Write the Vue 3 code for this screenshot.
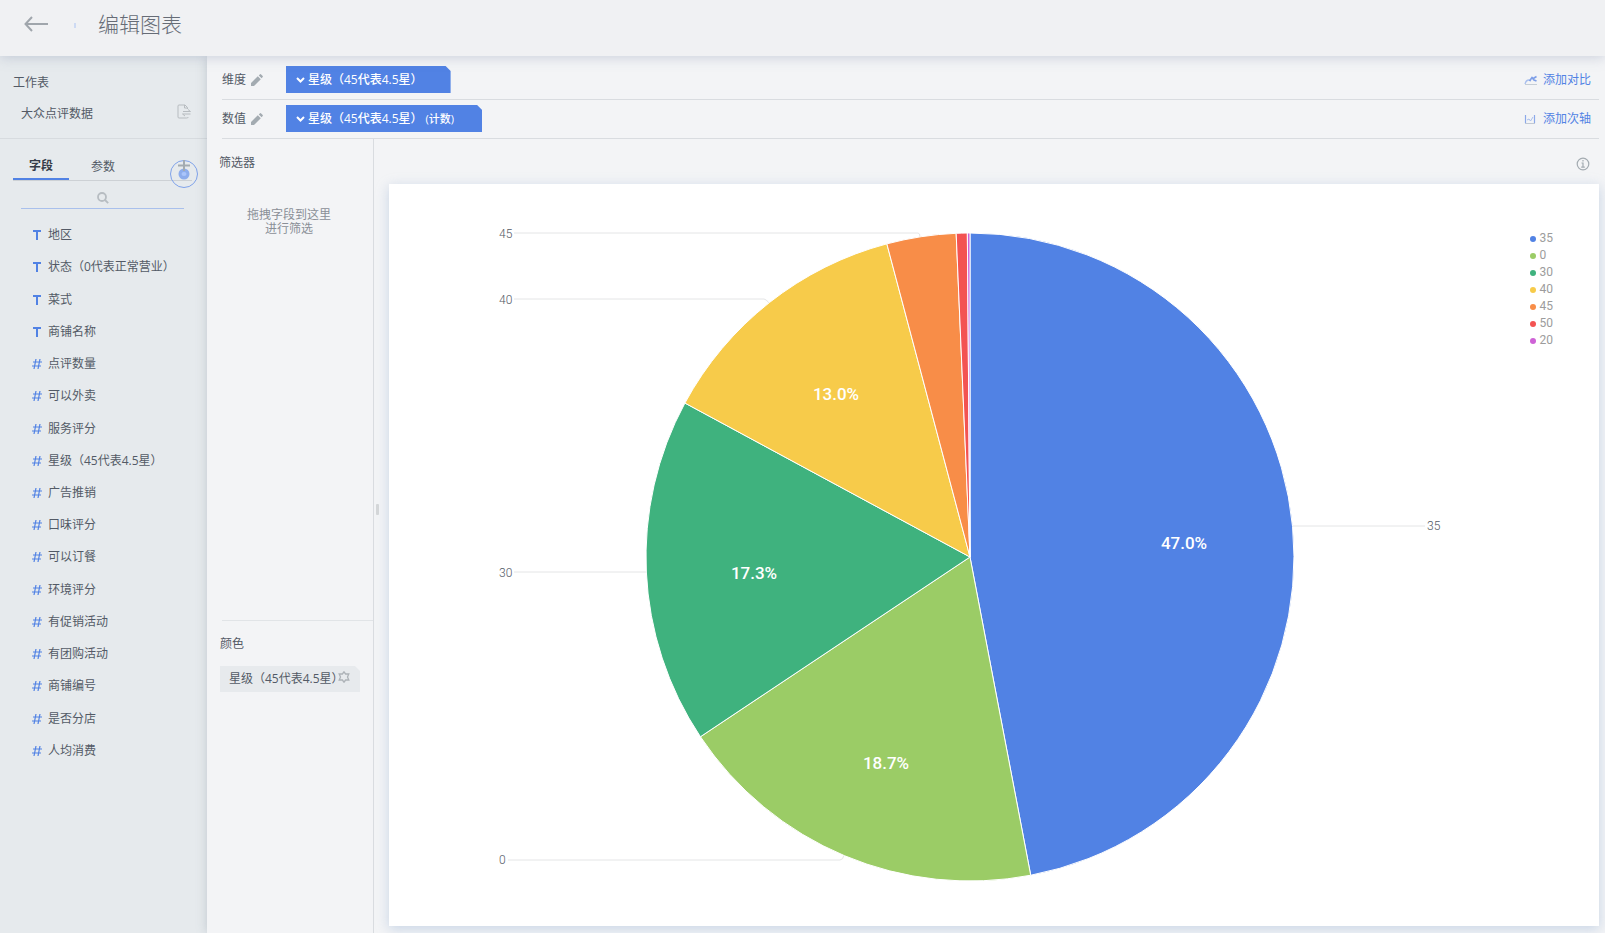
<script setup>
import { ref } from 'vue'

const textFields = ['地区', '状态（0代表正常营业）', '菜式', '商铺名称']
const numberFields = [
  '点评数量', '可以外卖', '服务评分', '星级（45代表4.5星）', '广告推销', '口味评分', '可以订餐',
  '环境评分', '有促销活动', '有团购活动', '商铺编号', '是否分店', '人均消费',
]
const fields = [
  ...textFields.map((name) => ({ name, type: 'text' })),
  ...numberFields.map((name) => ({ name, type: 'number' })),
]

const tab = ref('fields')
const keyword = ref('')

const cx = 581
const cy = 373
const r = 324

const series = [
  { name: '35', color: '#5182e4', from: 0, to: 0.47, percent: '47.0%', px: 795, py: 359 },
  { name: '0', color: '#9bcc66', from: 0.47, to: 0.6564, percent: '18.7%', px: 497, py: 579 },
  { name: '30', color: '#3fb27e', from: 0.6564, to: 0.8288, percent: '17.3%', px: 365, py: 389 },
  { name: '40', color: '#f7cb4a', from: 0.8288, to: 0.9587, percent: '13.0%', px: 447, py: 210 },
  { name: '45', color: '#f88d48', from: 0.9587, to: 0.9932, percent: '' },
  { name: '50', color: '#f35352', from: 0.9932, to: 0.9987, percent: '' },
  { name: '20', color: '#ce62d6', from: 0.9987, to: 1, percent: '' },
]

const leaders = [
  { name: '45', d: 'M125 49H529Q531 49 531 53', x: 110, y: 54 },
  { name: '40', d: 'M125 115H375Q377 115 380 119', x: 110, y: 120 },
  { name: '30', d: 'M125 388H257', x: 110, y: 393 },
  { name: '0', d: 'M119 676H451Q454 676 455 671', x: 110, y: 680 },
  { name: '35', d: 'M892 342H1036', x: 1038, y: 346 },
]

function point(t) {
  const a = t * Math.PI * 2
  return `${(cx + r * Math.sin(a)).toFixed(2)} ${(cy - r * Math.cos(a)).toFixed(2)}`
}

function slice(s) {
  return `M${cx} ${cy}L${point(s.from)}A${r} ${r} 0 0 1 ${point(s.to)}Z`
}
</script>

<template>
  <div class="page">
    <header class="topbar">
      <button class="back" aria-label="返回">
        <svg width="24" height="16" viewBox="0 0 24 16">
          <path d="M8 1L1.5 8L8 15M1.5 8H24" />
        </svg>
      </button>
      <span class="tick"></span>
      <h1>编辑图表</h1>
    </header>

    <div class="body">
      <aside class="sidebar">
        <section class="sheet">
          <h2>工作表</h2>
          <div class="sheet-row">
            <span>大众点评数据</span>
            <button aria-label="更换工作表">
              <svg width="14" height="15" viewBox="0 0 14 15">
                <path d="M10.5 5V3.5L8 1H2Q1 1 1 2V13Q1 14 2 14H9.5Q11 14 11.5 13M7.5 1V4H10.5M6 7.5H13.5L11 5.5M13.5 10H5.5L8 12" />
              </svg>
            </button>
          </div>
        </section>

        <nav class="tabs">
          <button :class="{ active: tab === 'fields' }" @click="tab = 'fields'">字段</button>
          <button :class="{ active: tab === 'params' }" @click="tab = 'params'">参数</button>
          <button class="add" aria-label="添加字段">
            <svg width="30" height="30" viewBox="0 0 30 30">
              <circle cx="15" cy="15" r="13.5" fill="none" stroke="#7fa2ea" />
              <circle cx="15" cy="15" r="5.5" fill="#8dadec" />
              <ellipse cx="15" cy="15" rx="2.5" ry="2" fill="#aac5fb" />
              <path d="M15 1V12M9 6.5H21" stroke="#a3abb1" stroke-width="2" />
            </svg>
          </button>
        </nav>

        <label class="search">
          <input v-model="keyword" type="text" aria-label="搜索字段" />
          <svg v-if="!keyword" width="12" height="12" viewBox="0 0 12 12">
            <circle cx="5" cy="5" r="4" /><path d="M8 8L11.2 11.2" />
          </svg>
        </label>

        <ul class="fields">
          <li v-for="f in fields" :key="f.name">
            <svg v-if="f.type === 'text'" width="10" height="10" viewBox="0 0 10 10">
              <path d="M1 1H9M5 1V10" stroke-width="2" />
            </svg>
            <svg v-else width="10" height="10" viewBox="0 0 10 10">
              <path d="M4 0L2 10M8 0L6 10M1 3H10M0 7H9" stroke-width="1.2" />
            </svg>
            <span>{{ f.name }}</span>
          </li>
        </ul>
      </aside>

      <main class="editor">
        <div class="shelf">
          <span class="shelf-name">维度</span>
          <button class="edit" aria-label="编辑维度">
            <svg width="12" height="12" viewBox="0 0 12 12"><path d="M0 9L6.8 2.2L9.8 5.2L3 12H0ZM7.8 1.4L9 .2Q9.4 -.1 9.9 .3L11.7 2.1Q12.1 2.6 11.7 3L10.6 4.2Z" /></svg>
          </button>
          <button class="pill">
            <svg width="9" height="6" viewBox="0 0 9 6"><path d="M1 1L4.5 4.5L8 1" /></svg>
            <span>星级（45代表4.5星）</span>
          </button>
          <a class="link" href="#">
            <svg width="14" height="12" viewBox="0 0 14 12">
              <path d="M1 10Q2 6 5 6L7 7" stroke="#a9bfee" stroke-width="1.3" />
              <path d="M5.5 7L8 3.5L10 6L12.5 7M8.5 5L12.5 2.5" stroke="#7e9fe8" stroke-width="1.6" />
              <path d="M1 10.5H13" stroke="#c5cdd6" />
            </svg>
            <span>添加对比</span>
          </a>
        </div>
        <div class="shelf">
          <span class="shelf-name">数值</span>
          <button class="edit" aria-label="编辑数值">
            <svg width="12" height="12" viewBox="0 0 12 12"><path d="M0 9L6.8 2.2L9.8 5.2L3 12H0ZM7.8 1.4L9 .2Q9.4 -.1 9.9 .3L11.7 2.1Q12.1 2.6 11.7 3L10.6 4.2Z" /></svg>
          </button>
          <button class="pill">
            <svg width="9" height="6" viewBox="0 0 9 6"><path d="M1 1L4.5 4.5L8 1" /></svg>
            <span>星级（45代表4.5星）</span><small>(计数)</small>
          </button>
          <a class="link" href="#">
            <svg width="14" height="12" viewBox="0 0 14 12">
              <path d="M1.5 2V10M10.5 2V10" stroke="#8ba8ea" stroke-width="1.2" />
              <path d="M3 7L5 6L6.5 8L9 4" stroke="#a9bfee" />
              <path d="M1 10.5H11" stroke="#c0c8d4" />
            </svg>
            <span>添加次轴</span>
          </a>
        </div>

        <div class="work">
          <section class="side">
            <div class="filters">
              <h2>筛选器</h2>
              <p>拖拽字段到这里<br />进行筛选</p>
            </div>
            <div class="colors">
              <h2>颜色</h2>
              <div class="chip">
                <span>星级（45代表4.5星）</span>
                <button aria-label="颜色设置">
                  <svg width="12" height="12" viewBox="0 0 12 12">
                    <path d="M6 .8L7.6 3H10.8L9.5 6L10.8 9H7.6L6 11.2L4.4 9H1.2L2.5 6L1.2 3H4.4Z" />
                  </svg>
                </button>
              </div>
            </div>
          </section>
          <div class="splitter"><i></i></div>

          <section class="view">
            <div class="toolbar">
              <button aria-label="图表信息">
                <svg width="14" height="14" viewBox="0 0 14 14">
                  <circle cx="7" cy="7" r="5.8" />
                  <path d="M7 3V4.5M5.5 6H7V10M5.2 10.2H8.8" />
                </svg>
              </button>
            </div>
            <div class="card">
              <svg class="pie" viewBox="0 0 1210 742" role="img" aria-label="星级占比饼图">
                <g class="leaders">
                  <g v-for="l in leaders" :key="l.name">
                    <path :d="l.d" />
                    <text :x="l.x" :y="l.y">{{ l.name }}</text>
                  </g>
                </g>
                <path v-for="s in series" :key="s.name" class="slice" :d="slice(s)" :fill="s.color" />
                <text v-for="s in series.filter((v) => v.percent)" :key="s.percent" class="percent" :x="s.px" :y="s.py">{{ s.percent }}</text>
              </svg>
              <ul class="legend">
                <li v-for="s in series" :key="s.name">
                  <i :style="{ background: s.color }"></i><span>{{ s.name }}</span>
                </li>
              </ul>
            </div>
          </section>
        </div>
      </main>
    </div>
  </div>
</template>

<style>
body {
  background: #f3f4f6;
}
</style>

<style scoped>
.page {
  display: flex;
  flex-direction: column;
  min-height: 100vh;
  font: 12px/16px "Open Sans", "Noto Sans CJK SC", sans-serif;
  color: #535a66;
}
h1, h2, p, ul {
  margin: 0;
  padding: 0;
  font-weight: 400;
}
h2 {
  font-size: 12px;
}
ul {
  list-style: none;
}
button {
  padding: 0;
  border: 0;
  background: none;
  font: inherit;
  color: inherit;
  cursor: pointer;
}
svg {
  display: block;
  flex: none;
  fill: none;
}

.topbar {
  position: relative;
  z-index: 2;
  display: flex;
  align-items: center;
  height: 56px;
  padding: 0 24px 8px;
  box-sizing: border-box;
  background: #f0f1f3;
  box-shadow: 0 1px 12px rgba(120, 135, 165, 0.35);
}
.back svg {
  stroke: #a0a6ac;
  stroke-width: 2;
}
.tick {
  width: 2px;
  height: 5px;
  margin: 2px 22px 0 26px;
  background: #cddaf3;
}
h1 {
  font-size: 21px;
  line-height: 28px;
  font-weight: 300;
  color: #666c76;
}

.body {
  flex: 1;
  display: flex;
}
.sidebar {
  flex: none;
  width: 207px;
  background: #e6eaed;
}
.sheet {
  padding: 19px 16px 15px 13px;
  border-bottom: 1px solid #d7dbdf;
}
.sheet-row {
  display: flex;
  justify-content: space-between;
  align-items: center;
  margin-top: 13px;
  padding-left: 8px;
}
.sheet-row svg {
  margin-bottom: 4px;
  stroke: #b7bcc0;
}
.tabs {
  position: relative;
  display: flex;
  margin: 16px 15px 0 13px;
  border-bottom: 1px solid #cdd1d5;
}
.tabs > button {
  height: 25px;
  padding: 0 16px 1px;
}
.tabs > button + button {
  padding: 0 22px 1px;
}
.tabs > .active {
  margin-bottom: -1px;
  border-bottom: 2px solid #5182e4;
  font-weight: 700;
  color: #353b48;
}
.tabs > .add {
  position: absolute;
  right: -7px;
  bottom: -9px;
  height: 30px;
  padding: 0;
}
.search {
  position: relative;
  display: block;
  margin: 6px 23px 0 21px;
}
.search input {
  display: block;
  width: 100%;
  height: 22px;
  padding: 0;
  box-sizing: border-box;
  border: 0;
  border-bottom: 1px solid #a9c0ec;
  outline: 0;
  background: none;
  font: inherit;
  text-align: center;
}
.search svg {
  position: absolute;
  left: calc(50% - 6px);
  top: 5px;
  stroke: #b7bdc2;
  stroke-width: 1.8;
}
.fields {
  display: grid;
  grid-auto-rows: 1fr;
  min-height: 548px;
  margin-top: 10px;
}
.fields li {
  display: flex;
  align-items: center;
  gap: 6px;
  padding-left: 32px;
  white-space: nowrap;
}
.fields svg {
  stroke: #5182e4;
}

.editor {
  position: relative;
  flex: 1;
  min-width: 0;
  display: flex;
  flex-direction: column;
  padding-top: 5px;
  background: #f3f4f6;
  box-shadow: 0 0 10px rgba(120, 135, 150, 0.35);
}
.shelf {
  display: flex;
  align-items: center;
  height: 39px;
  margin: 0 6px 0 15px;
  padding-bottom: 1px;
  box-sizing: border-box;
  border-bottom: 1px solid #d9dce0;
}
.shelf-name {
  width: 24px;
}
.edit {
  margin: 0 23px 0 5px;
}
.edit svg {
  fill: #a3abb1;
}
.pill {
  display: flex;
  align-items: center;
  height: 27px;
  padding: 0 28px 0 10px;
  background: #5182e4;
  clip-path: polygon(0 0, calc(100% - 5px) 0, 100% 5px, 100% 100%, 0 100%);
  color: #fff;
  font-weight: 500;
  white-space: nowrap;
}
.pill svg {
  margin-right: 3px;
  stroke: #fff;
  stroke-width: 2;
}
.pill small {
  margin-left: 3px;
  font-size: 11px;
}
.link {
  display: flex;
  align-items: center;
  gap: 5px;
  margin-left: auto;
  padding: 1px 8px 0 0;
  color: #5182e4;
  text-decoration: none;
}

.work {
  flex: 1;
  display: flex;
}
.side {
  flex: none;
  display: flex;
  flex-direction: column;
  width: 166px;
  border-right: 1px solid #d9dce0;
}
.filters {
  height: 481px;
  margin-left: 12px;
  padding-top: 16px;
  box-sizing: border-box;
}
.filters p {
  margin: 37px 14px 0 0;
  line-height: 14px;
  text-align: center;
  color: #8a8f96;
}
.colors {
  margin-left: 15px;
  padding-top: 15px;
  border-top: 1px solid #e1e4e7;
}
.colors h2,
.chip {
  margin-left: -2px;
}
.chip {
  display: flex;
  align-items: center;
  height: 26px;
  margin-top: 14px;
  margin-right: 13px;
  padding-left: 9px;
  background: #e7eaed;
  clip-path: polygon(0 0, calc(100% - 5px) 0, 100% 5px, 100% 100%, 0 100%);
  white-space: nowrap;
}
.chip span {
  width: 109px;
}
.chip button {
  margin-bottom: 4px;
}
.chip svg {
  stroke: #adb2b7;
  stroke-width: 1.3;
}
.splitter {
  display: flex;
  align-items: center;
  padding: 0 0 54px 2px;
}
.splitter i {
  width: 3px;
  height: 11px;
  border-radius: 1px;
  background: #d5d7d9;
}
.view {
  flex: 1;
  min-width: 0;
  display: flex;
  flex-direction: column;
  margin: 0 6px 7px 10px;
}
.toolbar {
  display: flex;
  justify-content: flex-end;
  align-items: center;
  height: 45px;
  padding-right: 9px;
}
.toolbar svg {
  margin-top: 4px;
  stroke: #a3abb1;
  stroke-width: 1.2;
}
.card {
  position: relative;
  flex: 1;
  background: #fff;
  box-shadow: 0 3px 12px rgba(135, 165, 205, 0.4);
}
.pie {
  width: 100%;
  height: auto;
}
.leaders path {
  stroke: #e4e5e6;
}
.leaders text {
  font-family: Roboto, sans-serif;
  font-size: 12px;
  font-weight: 300;
  fill: #535a66;
}
.slice {
  stroke: #fff;
  stroke-linejoin: bevel;
}
.percent {
  font-family: Roboto, sans-serif;
  font-size: 17px;
  font-weight: 500;
  text-anchor: middle;
  dominant-baseline: central;
  fill: #fff;
}
.legend {
  position: absolute;
  top: 45px;
  right: 46px;
  font-family: Roboto, sans-serif;
  color: #9c9c9c;
}
.legend li {
  display: flex;
  align-items: center;
  gap: 4px;
  height: 17px;
}
.legend i {
  width: 6px;
  height: 6px;
  margin-top: 2px;
  border-radius: 50%;
}
</style>
